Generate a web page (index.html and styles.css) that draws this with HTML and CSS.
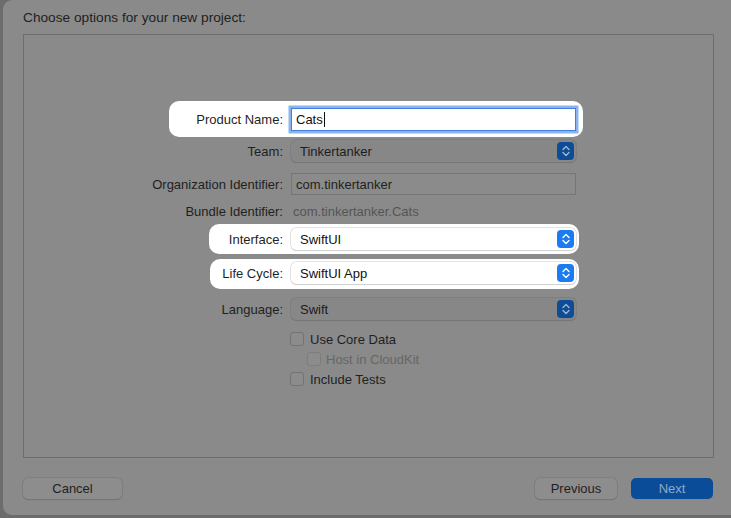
FILE: index.html
```html
<!DOCTYPE html>
<html>
<head>
<meta charset="utf-8">
<link rel="stylesheet" href="styles.css">
</head>
<body>
<div class="sheet">
  <div class="title">Choose options for your new project:</div>
  <div class="box">
    <div class="form">
      <div class="row r-product">
        <div class="pair hl hl-product">
          <span class="label">Product Name:</span>
          <div class="field focus"><span>Cats</span><span class="caret"></span></div>
        </div>
      </div>
      <div class="row r-team">
        <div class="pair">
          <span class="label">Team:</span>
          <div class="popup"><span>Tinkertanker</span><span class="stepper"><svg viewBox="0 0 10 14" width="10" height="14"><path d="M2 5.5 L5 2.5 L8 5.5 M2 8.5 L5 11.5 L8 8.5" fill="none" stroke="currentColor" stroke-width="1.4" stroke-linecap="round" stroke-linejoin="round"/></svg></span></div>
        </div>
      </div>
      <div class="row r-org">
        <div class="pair">
          <span class="label">Organization Identifier:</span>
          <div class="field plain"><span>com.tinkertanker</span></div>
        </div>
      </div>
      <div class="row r-bundle">
        <div class="pair">
          <span class="label">Bundle Identifier:</span>
          <div class="static">com.tinkertanker.Cats</div>
        </div>
      </div>
      <div class="row r-interface">
        <div class="pair hl hl-interface">
          <span class="label">Interface:</span>
          <div class="popup lit"><span>SwiftUI</span><span class="stepper"><svg viewBox="0 0 10 14" width="10" height="14"><path d="M2 5.5 L5 2.5 L8 5.5 M2 8.5 L5 11.5 L8 8.5" fill="none" stroke="currentColor" stroke-width="1.4" stroke-linecap="round" stroke-linejoin="round"/></svg></span></div>
        </div>
      </div>
      <div class="row r-life">
        <div class="pair hl hl-life">
          <span class="label">Life Cycle:</span>
          <div class="popup lit"><span>SwiftUI App</span><span class="stepper"><svg viewBox="0 0 10 14" width="10" height="14"><path d="M2 5.5 L5 2.5 L8 5.5 M2 8.5 L5 11.5 L8 8.5" fill="none" stroke="currentColor" stroke-width="1.4" stroke-linecap="round" stroke-linejoin="round"/></svg></span></div>
        </div>
      </div>
      <div class="row r-lang">
        <div class="pair">
          <span class="label">Language:</span>
          <div class="popup"><span>Swift</span><span class="stepper"><svg viewBox="0 0 10 14" width="10" height="14"><path d="M2 5.5 L5 2.5 L8 5.5 M2 8.5 L5 11.5 L8 8.5" fill="none" stroke="currentColor" stroke-width="1.4" stroke-linecap="round" stroke-linejoin="round"/></svg></span></div>
        </div>
      </div>
      <div class="checks">
        <label class="check"><span class="cb"></span>Use Core Data</label>
        <label class="check sub disabled"><span class="cb"></span>Host in CloudKit</label>
        <label class="check"><span class="cb"></span>Include Tests</label>
      </div>
    </div>
  </div>
  <div class="buttons">
    <button class="btn cancel">Cancel</button>
    <div class="spacer"></div>
    <button class="btn prev">Previous</button>
    <button class="btn next">Next</button>
  </div>
</div>
</body>
</html>
```

FILE: styles.css
```css
* { box-sizing: border-box; }
html, body {
  margin: 0;
  height: 100%;
}
body {
  background: #6c6c6c;
  font-family: "Liberation Sans", Arial, sans-serif;
  font-size: 13px;
  color: #1e1e1e;
  padding-left: 3px;
  overflow: hidden;
}
.sheet {
  background: #8a8a8a;
  height: 515px;
  width: 740px;
  border-radius: 9px;
  padding: 10px 0 0 20px;
  display: flex;
  flex-direction: column;
}
.title {
  height: 24px;
  line-height: 16px;
  font-size: 13.7px;
  color: #1f1f1f;
}
.box {
  width: 691px;
  height: 424px;
  border: 1px solid #6e6e6e;
  padding-top: 69px;
}
.form {
  display: flex;
  flex-direction: column;
  width: 552px;
}
.row {
  display: flex;
  justify-content: flex-end;
  align-items: center;
}
.r-product { height: 31px; }
.r-team { height: 32px; }
.r-org { height: 34px; }
.r-bundle { height: 20px; }
.r-interface { height: 36px; }
.r-life { height: 32px; }
.r-lang { height: 40px; }
.pair {
  display: flex;
  align-items: center;
  gap: 8px;
}
.label {
  color: #1f1f1f;
  white-space: nowrap;
}
.hl {
  background: #ffffff;
  border-radius: 10px;
}
.hl-product {
  padding: 7px 7px 6px 27px;
  margin: -7px -7px -6px -27px;
}
.hl-interface {
  padding: 4px 3px 4px 20px;
  margin: -4px -3px -4px -20px;
}
.hl-life {
  padding: 3px 3px 5px 12px;
  margin: -3px -3px -5px -12px;
}
.field {
  width: 285px;
  height: 23px;
  display: flex;
  align-items: center;
  padding-left: 4px;
}
.field.focus {
  background: #fff;
  border: 1px solid #3f7ede;
  box-shadow: 0 0 0 2.5px #8db3ee;
  padding-left: 4px;
  color: #111;
}
.caret {
  width: 1px;
  height: 15px;
  background: #111;
  margin-left: 1px;
}
.field.plain {
  height: 22px;
  border: 1px solid #767676;
  background: #8b8b8b;
  color: #1f1f1f;
}
.static {
  width: 285px;
  padding-left: 2px;
  color: #555;
}
.popup {
  width: 285px;
  height: 22px;
  border-radius: 5px;
  background: #878787;
  box-shadow: 0 0 0 0.5px #747474, 0 1px 1px rgba(0,0,0,0.12);
  display: flex;
  align-items: center;
  justify-content: space-between;
  padding: 0 2px 0 9px;
  color: #1c1c1c;
}
.popup.lit {
  background: #ffffff;
  box-shadow: 0 0 0 0.5px #c8c8c8, 0 1px 1px rgba(0,0,0,0.15);
  color: #111;
}
.stepper {
  width: 17px;
  height: 18px;
  border-radius: 4px;
  background: #0d4d98;
  color: #a5b5c9;
  display: flex;
  align-items: center;
  justify-content: center;
}
.popup.lit .stepper {
  background: #1b7cf2;
  color: #ffffff;
}
.checks {
  display: flex;
  flex-direction: column;
  padding-left: 266px;
}
.check {
  height: 20px;
  display: flex;
  align-items: center;
  gap: 6px;
  color: #1f1f1f;
}
.check.sub { padding-left: 17px; gap: 5px; }
.check.disabled { color: #666; }
.cb {
  width: 14px;
  height: 14px;
  border-radius: 3px;
  border: 1px solid #727272;
  background: #8c8c8c;
}
.check.disabled .cb { border-color: #7d7d7d; }
.buttons {
  display: flex;
  align-items: center;
  margin-top: 20px;
  width: 690px;
}
.spacer { flex: 1; }
.btn {
  font-family: inherit;
  font-size: 13px;
  height: 21px;
  border-radius: 5px;
  border: none;
  padding: 0;
}
.cancel, .prev {
  background: #8d8d8d;
  color: #1f1f1f;
  box-shadow: 0 0 0 0.5px #727272, 0 1px 1px rgba(0,0,0,0.15);
}
.cancel { width: 99px; }
.prev { width: 82px; margin-right: 14px; }
.next {
  width: 82px;
  background: #0b4c98;
  color: #8ea9c9;
}
```
